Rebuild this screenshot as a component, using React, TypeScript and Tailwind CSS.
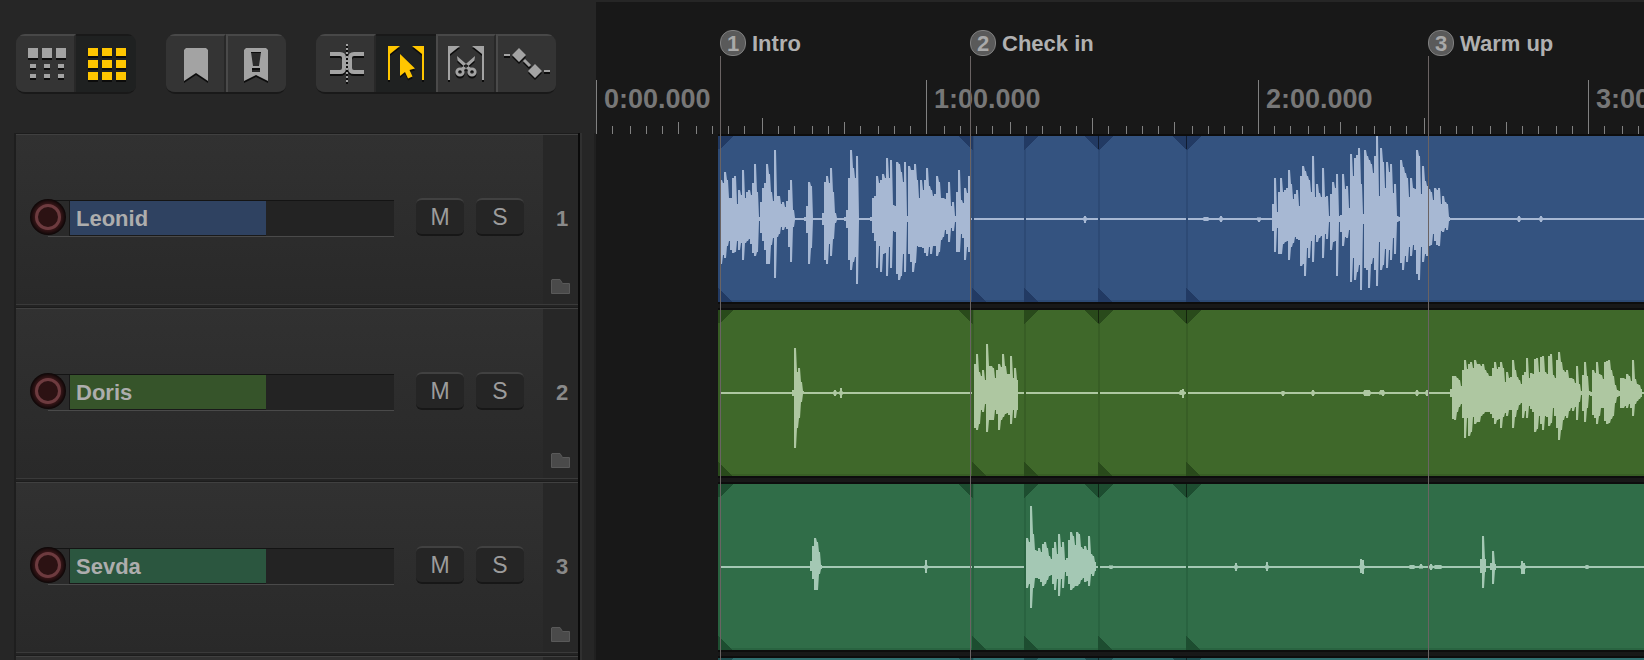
import React, { useState } from 'react';

/* ---------- timeline geometry ---------- */

const CLIP_START = 122; // px from the left edge of the timeline
const TICK = 16.54; // px between two ruler ticks (3 seconds)
const CENTER = 83;
const SPLITS = [254, 306, 380, 468];

type Segment = { x: number; up: number[]; down: number[] };
type Blip = [x: number, width: number, up: number, down: number];
type Track = {
  name: string;
  clip: string;
  edge: string;
  shade: string;
  wave: string;
  plate: string;
  segments: Segment[];
  blips: Blip[];
};

const tracks: Track[] = [
  {
    name: 'Leonid',
    clip: '#345380',
    edge: '#2d4a75',
    shade: '#223a63',
    wave: '#a7b8d3',
    plate: 'bg-[#2f4261]',
    segments: [
      {
        x: 2,
        up: [
          39, 36, 47, 39, 21, 21, 41, 43, 15, 29, 24, 49, 21, 27, 29, 24, 36, 55, 27, 2, 17, 31, 36, 55, 45, 27, 18, 69,
          23, 23, 15, 17, 12, 18, 29, 39, 9, 1, 1, 1, 1, 1, 2, 13, 37, 33, 1, 1, 1, 1, 1, 6, 37, 43, 36, 51, 27, 6, 1, 1,
          1, 1, 2, 9, 41, 69, 51, 41, 63, 1, 1, 1, 1, 1, 1, 2, 21, 23, 43, 36, 39, 45, 41, 61, 41, 59, 14, 13, 57, 55,
          47, 37, 57, 3, 53, 49, 49, 55, 39, 21, 39, 29, 39, 51, 33, 29, 23, 25, 43, 37, 21, 21, 20, 26, 37, 13, 17, 3,
          27, 49, 19, 16, 31, 26, 43,
        ],
        down: [
          45, 36, 39, 27, 22, 31, 34, 33, 22, 31, 24, 41, 24, 22, 20, 25, 34, 37, 33, 2, 14, 22, 31, 45, 45, 26, 19, 59,
          18, 15, 8, 11, 8, 10, 28, 43, 8, 1, 1, 1, 1, 1, 2, 14, 45, 29, 1, 1, 1, 1, 1, 6, 41, 45, 25, 37, 20, 4, 1, 1, 1,
          1, 2, 9, 41, 51, 43, 38, 65, 1, 1, 1, 1, 1, 1, 2, 14, 22, 49, 27, 53, 35, 34, 57, 28, 49, 12, 13, 55, 61, 57,
          35, 53, 3, 35, 43, 53, 44, 27, 28, 28, 29, 34, 37, 28, 35, 27, 27, 37, 33, 21, 18, 11, 15, 23, 9, 12, 3, 33,
          33, 15, 19, 41, 28, 33,
        ],
      },
      {
        x: 554,
        up: [
          15, 41, 7, 27, 41, 27, 29, 31, 49, 35, 20, 25, 29, 13, 43, 53, 48, 43, 39, 27, 63, 22, 35, 26, 22, 51, 22, 23,
          3, 25, 37, 31, 45, 3, 4, 45, 30, 33, 11, 65, 43, 61, 64, 71, 35, 5, 69, 63, 59, 55, 46, 63, 83, 23, 71, 57, 31,
          57, 47, 55, 26, 35, 3, 2, 59, 52, 46, 41, 22, 41, 31, 30, 69, 63, 25, 53, 38, 33, 30, 27, 19, 31, 29, 31, 15,
          23, 17, 15, 2,
        ],
        down: [
          12, 33, 9, 35, 35, 25, 23, 22, 41, 28, 24, 18, 20, 21, 47, 45, 57, 29, 39, 22, 43, 16, 23, 19, 17, 39, 15, 20,
          3, 31, 23, 22, 57, 3, 13, 27, 18, 19, 11, 63, 39, 61, 53, 46, 71, 5, 49, 51, 69, 45, 39, 51, 67, 23, 51, 46, 30,
          49, 31, 41, 19, 35, 3, 2, 44, 51, 37, 43, 28, 37, 26, 31, 55, 61, 28, 43, 35, 37, 27, 26, 15, 22, 26, 27, 12,
          13, 9, 11, 2,
        ],
      },
    ],
    blips: [
      [366, 2, 3, 4],
      [486, 4, 2, 2],
      [502, 2, 3, 3],
      [540, 2, 1, 3],
      [800, 2, 3, 3],
      [822, 2, 3, 3],
    ],
  },
  {
    name: 'Doris',
    clip: '#3f682a',
    edge: '#385e25',
    shade: '#294a1b',
    wave: '#aec7a1',
    plate: 'bg-[#36542a]',
    segments: [
      { x: 74, up: [3, 45, 21, 25, 11, 2], down: [3, 55, 35, 25, 9, 1] },
      {
        x: 256,
        up: [29, 39, 21, 17, 23, 13, 49, 27, 27, 25, 15, 23, 29, 26, 39, 27, 19, 19, 37, 15, 25, 13],
        down: [35, 37, 31, 17, 19, 11, 39, 27, 27, 27, 17, 21, 37, 27, 24, 21, 20, 22, 31, 17, 25, 17],
      },
      {
        x: 732,
        up: [
          4, 17, 17, 15, 13, 7, 23, 33, 24, 29, 31, 25, 33, 29, 29, 27, 29, 23, 20, 17, 17, 25, 31, 24, 26, 31, 25, 11,
          21, 15, 16, 33, 23, 16, 13, 9, 18, 21, 35, 15, 20, 19, 34, 35, 21, 36, 37, 21, 19, 37, 39, 18, 15, 33, 41, 31,
          23, 21, 23, 15, 15, 14, 10, 27, 9, 2, 18, 31, 17, 2, 1, 23, 20, 31, 19, 18, 14, 31, 32, 33, 23, 17, 8, 3, 2,
          15, 15, 14, 19, 17, 12, 33, 14, 9, 8, 4,
        ],
        down: [
          4, 26, 27, 19, 14, 11, 25, 45, 25, 43, 39, 24, 31, 29, 29, 23, 21, 19, 19, 19, 21, 25, 31, 27, 26, 35, 24, 20,
          23, 17, 17, 35, 24, 17, 12, 10, 25, 18, 25, 13, 16, 19, 39, 36, 23, 31, 37, 23, 24, 33, 30, 15, 23, 35, 47, 37,
          27, 23, 25, 18, 15, 18, 14, 27, 9, 2, 18, 29, 15, 2, 3, 22, 25, 31, 23, 15, 15, 28, 31, 30, 26, 23, 10, 4, 3,
          15, 15, 13, 15, 11, 15, 23, 11, 8, 6, 4,
        ],
      },
    ],
    blips: [
      [116, 2, 3, 3],
      [122, 2, 5, 5],
      [462, 2, 3, 2],
      [464, 2, 4, 5],
      [564, 2, 2, 3],
      [594, 2, 3, 3],
      [646, 6, 3, 3],
      [662, 2, 3, 1],
      [664, 2, 3, 3],
      [698, 2, 3, 3],
      [708, 2, 3, 3],
    ],
  },
  {
    name: 'Sevda',
    clip: '#306d48',
    edge: '#296340',
    shade: '#1d4d30',
    wave: '#a4c8b4',
    plate: 'bg-[#2b563f]',
    segments: [
      { x: 92, up: [6, 21, 29, 25, 15, 2], down: [4, 12, 23, 23, 7, 2] },
      {
        x: 308,
        up: [
          29, 25, 61, 33, 17, 16, 19, 15, 23, 25, 19, 11, 8, 19, 25, 13, 33, 20, 25, 7, 9, 27, 35, 31, 22, 35, 33, 20,
          18, 21, 17, 31, 13, 11, 5,
        ],
        down: [
          21, 17, 41, 21, 11, 11, 12, 15, 19, 17, 13, 9, 8, 17, 23, 12, 29, 12, 21, 5, 9, 17, 23, 21, 19, 19, 17, 13, 11,
          15, 14, 19, 7, 9, 4,
        ],
      },
      { x: 762, up: [8, 31, 8], down: [6, 21, 5] },
      { x: 772, up: [4, 16, 3], down: [3, 17, 3] },
    ],
    blips: [
      [207, 2, 7, 6],
      [392, 2, 1, 2],
      [517, 2, 4, 4],
      [548, 2, 5, 4],
      [642, 2, 8, 6],
      [644, 2, 7, 7],
      [692, 4, 2, 2],
      [702, 2, 3, 1],
      [712, 2, 3, 3],
      [717, 6, 2, 2],
      [803, 2, 6, 7],
      [805, 2, 4, 7],
      [868, 2, 2, 2],
    ],
  },
  {
    name: '',
    clip: '#2f6f70',
    edge: '#286465',
    shade: '#1c4d4f',
    wave: '#a3c7c8',
    plate: 'bg-[#2b5556]',
    segments: [],
    blips: [],
  },
];

const markers = [
  { n: 1, x: 124, label: 'Intro' },
  { n: 2, x: 374, label: 'Check in' },
  { n: 3, x: 832, label: 'Warm up' },
];

const evenPx = (v: number) => Math.round(v / 2) * 2;
const tickX = (i: number) => evenPx(i * TICK);
const tickTop = (i: number) => (i % 20 === 0 ? 80 : i % 10 === 0 ? 118 : i % 5 === 0 ? 122 : 126);

/* Upper or lower outline of a segment: a 2px plateau per sample, joined by steep slopes. */
function outline(x: number, heights: number[]): [number, number][] {
  const points: [number, number][] = [];
  heights.forEach((h, i) => {
    const left = x + i * 2;
    const prev = heights[i - 1] ?? h;
    const next = heights[i + 1] ?? h;
    if (prev < h) points.push([left - 1, prev]);
    points.push([left, h], [left + 2, h]);
    if (next < h) points.push([left + 3, next]);
  });
  return points
    .filter(([px], i, all) => i === 0 || px >= all[i - 1][0])
    .map(([px, h]) => [px, h]);
}

function segmentPath({ x, up, down }: Segment) {
  const side = (heights: number[], sign: number) =>
    `M${x} ${CENTER}` +
    outline(x, heights)
      .map(([px, h]) => `L${px} ${CENTER + sign * h}`)
      .join('') +
    `L${x + heights.length * 2} ${CENTER}Z`;
  return side(up, -1) + side(down, 1);
}

function ClipLane({ track }: { track: Track }) {
  const starts = [2, ...SPLITS.map((s) => s + 2)];
  return (
    <div className="h-[174px] pb-1">
      <div className="border-y-2 border-[#0d0d0d]">
        <svg width="100%" height="166" className="block overflow-hidden" shapeRendering="crispEdges" aria-hidden="true">
          <rect width="100%" height="166" fill={track.clip} />
          <rect y="164" width="100%" height="2" fill={track.edge} />
          <rect width="2" height="166" fill={track.edge} />
          {SPLITS.map((s) => (
            <rect key={s} x={s} width="2" height="166" fill={track.edge} />
          ))}
          <g fill={track.shade}>
            <path d="M0 0H15L2 13H0Z" />
            <path d={`M${SPLITS[0] - 14} 0h15v14Z`} />
            <path d={`M${SPLITS[1]} 0h15l-15 14Z`} />
            <path d={`M${SPLITS[2] - 14} 0h30l-15 14Z`} />
            <path d={`M${SPLITS[3] - 14} 0h30l-15 14Z`} />
            {[0, ...SPLITS].map((s) => (
              <path key={s} d={`M${s} 152l15 14h-15Z`} />
            ))}
          </g>
          <g fill="#000" opacity="0.5">
            <rect x={SPLITS[2]} width="1" height="13" />
            <rect x={SPLITS[3]} width="1" height="13" />
          </g>
          <g fill={track.wave}>
            {starts.map((x, i) =>
              i < SPLITS.length ? (
                <rect key={x} x={x} y={CENTER - 1} width={SPLITS[i] - x} height="2" />
              ) : (
                <rect key={x} x={x} y={CENTER - 1} width="100%" height="2" />
              ),
            )}
            {track.segments.map((s) => (
              <path key={s.x} d={segmentPath(s)} shapeRendering="geometricPrecision" />
            ))}
            {track.blips.map(([x, w, u, d]) => (
              <React.Fragment key={x}>
                <rect x={x} y={CENTER - u} width={w} height={u + d} />
                <rect x={x - 1} y={CENTER - 2} width={w + 2} height="4" opacity="0.6" />
              </React.Fragment>
            ))}
          </g>
        </svg>
      </div>
    </div>
  );
}

function Timeline() {
  return (
    <main className="relative min-w-0 flex-1 overflow-hidden border-t-2 border-[#262626] bg-[#181818]">
      <div className="relative h-[132px]">
        <svg width="100%" height="132" className="block" shapeRendering="crispEdges" aria-hidden="true">
          {Array.from({ length: 200 }, (_, i) => (
            <rect key={i} x={tickX(i)} y={tickTop(i) - 2} width="1" height={134 - tickTop(i)} fill="#818181" />
          ))}
        </svg>
        {[0, 1, 2, 3].map((m) => (
          <span
            key={m}
            className="absolute top-[81px] pl-2 text-[27px] leading-8 font-bold text-[#777777]"
            style={{ left: tickX(m * 20) }}
          >
            {m}:00.000
          </span>
        ))}
      </div>
      <div style={{ marginLeft: CLIP_START }}>
        {tracks.map((t, i) => (
          <ClipLane key={i} track={t} />
        ))}
      </div>
      {markers.map((m) => (
        <div key={m.n} className="pointer-events-none absolute inset-y-0 flex flex-col pt-7" style={{ left: m.x }}>
          <div className="flex h-[26px] items-center gap-[6px]">
            <span className="flex size-[26px] shrink-0 items-center justify-center rounded-[12px] border border-[#808080] bg-[#5a5a5a] pt-px text-[22px] leading-6 font-bold text-[#a9a9a9]">
              {m.n}
            </span>
            <span className="pt-[2px] text-[22px] leading-6 font-bold whitespace-nowrap text-[#b0b0b0]">{m.label}</span>
          </div>
          <span className="w-px flex-1 bg-[#6a6363]" />
        </div>
      ))}
    </main>
  );
}

/* ---------- toolbar ---------- */

const cols = [12, 26, 40];

const icons: Record<string, React.ReactNode> = {
  ripple: cols.map((x) => (
    <g key={x}>
      <rect x={x} y="14" width="10" height="10" />
      <rect x={x + 2} y="30" width="6" height="4" />
      <rect x={x + 2} y="40" width="6" height="4" />
    </g>
  )),
  grid: cols.map((x) => (
    <g key={x}>
      <rect x={x} y="14" width="10" height="8" />
      <rect x={x} y="26" width="10" height="8" />
      <rect x={x} y="38" width="10" height="8" />
    </g>
  )),
  bookmark: <path d="M20 14H40L42 16V47L30 39L18 47V16Z" />,
  alert: (
    <>
      <path d="M20 14H40L42 16V47L30 41L18 47V16Z" />
      <path d="M25 18H35L33 32H27ZM26 34H34V38H26Z" fill="#2b2b2b" />
      <path d="M25 18H35V19H25ZM26 34H34V36H26Z" fill="#0c0c0c" />
    </>
  ),
  split: (
    <>
      <path
        d="M14 20H24Q28 20 28 24V34Q28 38 24 38H14M48 20H38Q34 20 34 24V34Q34 38 38 38H48"
        fill="none"
        stroke="currentColor"
        strokeWidth="4"
      />
      <path d="M31 10V49" stroke="currentColor" strokeWidth="2" strokeDasharray="2 2" />
    </>
  ),
  select: (
    <>
      <path d="M12 12H24L14 20V46H12ZM48 12H36L46 20V46H48Z" />
      <path d="M24 20V42L29 38L32 44.500L36.500 42.500L33.500 36L39 34.500Z" />
    </>
  ),
  cut: (
    <>
      <path d="M12 12H24L14 20V46H12ZM48 12H36L46 20V46H48Z" />
      <path d="M21 22L21.500 26.500L33 37L36 35ZM39 22L38.500 26.500L27 37L24 35Z" />
      <g fill="none" stroke="currentColor" strokeWidth="2.800">
        <circle cx="24" cy="38" r="3.200" />
        <circle cx="36" cy="38" r="3.200" />
      </g>
    </>
  ),
  envelope: (
    <>
      <path d="M8 20H14V22H8ZM48 36H54V38H48Z" />
      <path d="M23 14L30 21L23 28L16 21ZM39 30L46 37L39 44L32 37Z" />
      <path d="M28 26L34 32" stroke="currentColor" strokeWidth="3" />
    </>
  ),
};

const groups = [
  [
    { id: 'ripple', label: 'Ripple editing' },
    { id: 'grid', label: 'Snap to grid' },
  ],
  [
    { id: 'bookmark', label: 'Add marker' },
    { id: 'alert', label: 'Add edit marker' },
  ],
  [
    { id: 'split', label: 'Split at cursor' },
    { id: 'select', label: 'Select tool' },
    { id: 'cut', label: 'Cut tool' },
    { id: 'envelope', label: 'Envelopes' },
  ],
];

function Toolbar() {
  const [active, setActive] = useState<string[]>(['grid', 'select']);
  const toggle = (id: string) => setActive((a) => (a.includes(id) ? a.filter((v) => v !== id) : [...a, id]));
  return (
    <div className="flex h-[133px] items-start gap-[30px] pt-[34px] pl-4">
      {groups.map((g) => (
        <div key={g[0].id} className="flex overflow-hidden rounded-[9px] border-b-2 border-[#191919]">
          {g.map((b, i) => {
            const on = active.includes(b.id);
            return (
              <button
                key={b.id}
                type="button"
                aria-label={b.label}
                aria-pressed={on}
                onClick={() => toggle(b.id)}
                className={`relative h-[58px] w-[60px] border-t-2 ${
                  on ? 'border-t-[#191919] bg-[#1f2121] text-[#ffc600]' : 'border-t-[#484848] bg-[#343434] text-[#a3a3a3]'
                } ${i > 0 && !on ? 'border-l-2 border-l-[#4a4a4a]' : ''} ${
                  i < g.length - 1 && !on ? 'border-r-2 border-r-[#282828]' : ''
                }`}
              >
                <svg
                  viewBox="0 0 60 58"
                  width="60"
                  height="58"
                  fill="currentColor"
                  className={`absolute -top-[2px] drop-shadow-[0_2px_0_#0c0c0c] ${i > 0 && !on ? '-left-[2px]' : 'left-0'}`}
                >
                  {icons[b.id]}
                </svg>
              </button>
            );
          })}
        </div>
      ))}
    </div>
  );
}

/* ---------- track headers ---------- */

const keyClass =
  'h-[38px] w-[48px] rounded-[6px] border-t-2 border-b-2 border-t-[#414141] border-b-[#171717] bg-[#252525] text-[23px] leading-[34px] text-[#9c9c9c]';

function TrackHeader({ track, index }: { track: Track; index: number }) {
  const [name, setName] = useState(track.name);
  return (
    <li className="h-[174px] border-t border-[#1c1c1c] bg-[#232323] pb-[2px]">
      <div className="flex h-[171px] border-y border-t-[#404040] border-b-[#3a3a3a] bg-linear-to-b from-[#313131] to-[#292929]">
        <div className="flex min-w-0 flex-1 items-start pt-[63px] pl-[14px]">
          {track.name && (
            <>
              <button
                type="button"
                aria-label={`Arm ${track.name} for recording`}
                className="z-10 mt-px flex size-9 shrink-0 items-center justify-center rounded-full bg-[radial-gradient(circle_closest-side,#3a1719_70%,#0c0606_100%)]"
              >
                <span className="size-[26px] rounded-full border-[3px] border-[#6d3b3f] bg-[#2c1213]" />
              </button>
              <div className="mt-[2px] -ml-[18px] flex h-[37px] w-[346px] border-t border-b border-t-[#141414] border-b-[#4a4a4a] bg-[#232323]">
                <div className="w-[22px] border-r border-[#181818] bg-[#2a2a2a]" />
                <input
                  aria-label={`Track ${index + 1} name`}
                  value={name}
                  onChange={(e) => setName(e.target.value)}
                  className={`h-[35px] w-[196px] border-b border-[#1a1a1a] pt-[2px] pl-[6px] text-[22px] leading-8 font-bold text-[#adadad] outline-none ${track.plate}`}
                />
              </div>
              <div className="ml-[22px] flex gap-3">
                <button type="button" aria-label={`Mute ${track.name}`} className={keyClass}>
                  M
                </button>
                <button type="button" aria-label={`Solo ${track.name}`} className={keyClass}>
                  S
                </button>
              </div>
            </>
          )}
        </div>
        <div className="flex w-[35px] flex-col items-center justify-end bg-[#272727] pb-[10px]">
          {track.name && (
            <>
              <span className="mb-[46px] pl-[3px] text-[22px] leading-7 font-bold text-[#8a8a8a]">{index + 1}</span>
              <button type="button" aria-label={`Folder mode of ${track.name}`}>
                <svg width="19" height="15" viewBox="0 0 19 15" className="block">
                  <path d="M1 .5H9L11.500 4.500H18.500V14.500H.5V1Z" fill="#4a4a4a" stroke="#595959" />
                </svg>
              </button>
            </>
          )}
        </div>
      </div>
    </li>
  );
}

export default function App() {
  return (
    <div className="flex h-screen overflow-hidden bg-[#262626] font-['Liberation_Sans',Arial,sans-serif]">
      <aside className="w-[596px] shrink-0">
        <Toolbar />
        <div className="border-r-2 border-[#202020] pr-3 pl-[14px]">
          <div className="border-r-2 border-[#303030]">
            <ul className="border-r-2 border-l-2 border-r-[#0a0a0a] border-l-[#1e1e1e]">
              {tracks.map((t, i) => (
                <TrackHeader key={i} track={t} index={i} />
              ))}
            </ul>
          </div>
        </div>
      </aside>
      <Timeline />
    </div>
  );
}
